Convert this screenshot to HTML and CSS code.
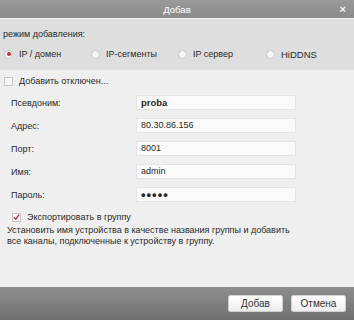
FILE: index.html
```html
<!DOCTYPE html>
<html lang="ru">
<head>
  <meta charset="UTF-8" />
  <title>Добав</title>
  <link rel="stylesheet" href="styles.css">
</head>
<body>
  <div class="dialog">
    <div class="titlebar">
      <span class="title">Добав</span>
      <span class="close">&#215;</span>
    </div>

    <div class="mode">
      <div class="mode-label">режим добавления:</div>
      <div class="radios">
        <label class="radio"><span class="dot on"></span>IP / домен</label>
        <label class="radio"><span class="dot"></span>IP-сегменты</label>
        <label class="radio"><span class="dot"></span>IP сервер</label>
        <label class="radio latin"><span class="dot"></span>HiDDNS</label>
      </div>
    </div>

    <div class="content">
      <label class="check offline"><span class="box"></span>Добавить отключен...</label>

      <div class="row"><span class="lbl">Псевдоним:</span><div class="field bold">proba</div></div>
      <div class="row"><span class="lbl">Адрес:</span><div class="field">80.30.86.156</div></div>
      <div class="row"><span class="lbl">Порт:</span><div class="field">8001</div></div>
      <div class="row"><span class="lbl">Имя:</span><div class="field">admin</div></div>
      <div class="row"><span class="lbl">Пароль:</span><div class="field pass">&#8226;&#8226;&#8226;&#8226;&#8226;</div></div>

      <label class="check export"><span class="box">
        <svg width="8" height="8" viewBox="0 0 8 8"><path d="M1 4.2 L3.2 6.4 L7 1.2" fill="none" stroke="#c0303a" stroke-width="1.6"/></svg>
      </span>Экспортировать в группу</label>

      <p class="note">Установить имя устройства в качестве названия группы и добавить все каналы, подключенные к устройству в группу.</p>
    </div>

    <div class="footer">
      <button class="btn">Добав</button>
      <button class="btn">Отмена</button>
    </div>
  </div>
</body>
</html>
```

FILE: styles.css
```css
* { box-sizing: border-box; margin: 0; padding: 0; }
body {
  font-family: "Liberation Sans", Arial, sans-serif;
  font-size: 9px;
  color: #2a2a2a;
  background: #efefef;
}
.dialog {
  width: 354px;
  height: 320px;
  display: flex;
  flex-direction: column;
  background: #efefef;
}
.titlebar {
  height: 18px;
  flex: none;
  display: flex;
  align-items: center;
  justify-content: center;
  position: relative;
  background: linear-gradient(#9a9a9a, #8a8a8a);
  color: #fff;
}
.title { font-size: 9.5px; }
.close {
  position: absolute;
  right: 8px;
  top: 3px;
  font-size: 11px;
  color: #f4f4f4;
  font-weight: bold;
}
.mode {
  height: 52px;
  flex: none;
  background: #dedede;
  border-top: 1px solid #f2f2f2;
  padding: 10px 0 0 3px;
}
.mode-label { height: 18px; }
.radios {
  display: grid;
  grid-template-columns: 87px 87px 88px 80px;
  margin-left: 1px;
}
.radio {
  display: flex;
  align-items: center;
  gap: 6px;
  height: 14px;
}
.latin { font-size: 9.5px; }
.dot {
  width: 9px;
  height: 9px;
  border-radius: 50%;
  border: 1px solid #c6c6c6;
  background: #f6f6f6;
  display: flex;
  align-items: center;
  justify-content: center;
}
.dot.on::after {
  content: "";
  width: 4px;
  height: 4px;
  border-radius: 50%;
  background: #c0303a;
}
.content {
  flex: 1;
  padding: 4px 0 0 4px;
}
.check {
  display: flex;
  align-items: center;
  gap: 6px;
  height: 14px;
}
.box {
  width: 9px;
  height: 9px;
  border: 1px solid #c8c8c8;
  background: #f6f6f6;
  display: flex;
  align-items: center;
  justify-content: center;
}
.offline { margin-bottom: 7px; }
.row {
  display: flex;
  align-items: center;
  height: 15px;
  margin-bottom: 8px;
}
.lbl {
  width: 132px;
  padding-left: 7px;
}
.field {
  width: 160px;
  height: 15px;
  background: #fafafa;
  border: 1px solid #e4e4e4;
  padding-left: 4px;
  line-height: 13px;
}
.bold { font-weight: bold; font-size: 9.5px; }
.pass { letter-spacing: 1px; font-size: 13px; font-weight: bold; }
.export {
  margin: 0 0 0 8px;
}
.export .box { background: #fbfbfb; }
.note {
  margin: 1px 0 0 3px;
  line-height: 11px;
  width: 292px;
}
.footer {
  height: 33px;
  flex: none;
  display: flex;
  justify-content: flex-end;
  align-items: center;
  gap: 8px;
  padding-right: 8px;
  background: linear-gradient(#8e8e8e, #707070);
}
.btn {
  width: 55px;
  height: 17px;
  font-family: "Liberation Sans", Arial, sans-serif;
  font-size: 10px;
  color: #333;
  background: linear-gradient(#ffffff, #ececec);
  border: 1px solid #d0d0d0;
  border-radius: 2px;
}
```
